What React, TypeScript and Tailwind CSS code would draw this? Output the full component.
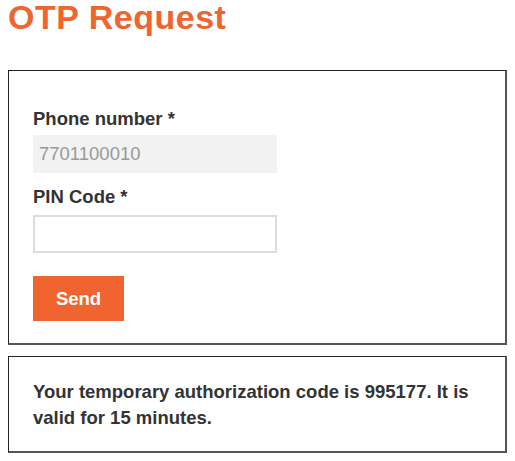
export default function App() {
  return (
    <div className="min-h-screen bg-white px-2 font-['Liberation_Sans',Arial,sans-serif] text-[#333]">
      <h1 className="text-[34px] font-bold leading-none tracking-[0.5px] text-[#f0652f]">OTP Request</h1>

      <div className="mt-[36px] border-t border-l border-r-2 border-b-2 border-t-[#222] border-l-[#222] border-r-[#555] border-b-[#555] px-6 pt-[36px] pb-[22px]">
        <label className="block text-[18.5px] font-bold leading-6">Phone number *</label>
        <input
          className="mt-[4px] block h-[38px] w-[244px] bg-[#f2f2f2] px-[6px] text-[18.5px] text-[#999] outline-none"
          value="7701100010"
          disabled
          readOnly
        />
        <label className="mt-[12px] block text-[18.5px] font-bold leading-6">PIN Code *</label>
        <input className="mt-[6px] block h-[38px] w-[244px] border-2 border-[#ddd] bg-white px-2 text-[18.5px] outline-none" />
        <button className="mt-[23px] block h-[45px] w-[91px] bg-[#f0652f] text-[18.5px] font-bold text-white">
          Send
        </button>
      </div>

      <div className="mt-[11px] border-t border-l border-r-2 border-b-2 border-t-[#222] border-l-[#222] border-r-[#555] border-b-[#555] px-6 pt-[22px] pb-[20px]">
        <p className="text-[18.5px] font-bold leading-[26px]">
          Your temporary authorization code is 995177. It is valid for 15 minutes.
        </p>
      </div>
    </div>
  );
}
